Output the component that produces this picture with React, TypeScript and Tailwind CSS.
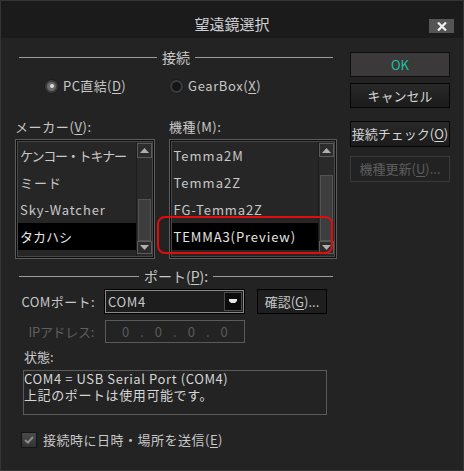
import React from 'react';

const ff = "font-['Noto_Sans_CJK_JP','Noto_Sans',sans-serif]";

function GroupLine({ children }: { children: React.ReactNode }) {
  return (
    <div className="flex items-center h-[14px] w-[314px] ml-[4px]">
      <div className="flex-1 h-px bg-[#9c9c9c]" />
      <span className="px-[5px] leading-none text-[14px] whitespace-nowrap">{children}</span>
      <div className="flex-1 h-px bg-[#9c9c9c]" />
    </div>
  );
}

function Radio({ checked }: { checked?: boolean }) {
  return (
    <span className="w-[15px] h-[15px] rounded-full bg-[#3c3c3c] border border-[#1a1a1a] flex items-center justify-center">
      <span className={`w-[9px] h-[9px] rounded-full flex items-center justify-center ${checked ? 'bg-[#6a6a6a]' : 'bg-[#151515]'}`}>
        {checked && <span className="w-[4px] h-[4px] rounded-full bg-[#dcdcdc]" />}
      </span>
    </span>
  );
}

function Arrow({ up }: { up?: boolean }) {
  return (
    <svg width="9" height="5" viewBox="0 0 9 5">
      {up ? <path d="M4.5 0 L9 5 L0 5 Z" fill="#b0b0b0" /> : <path d="M0 0 L9 0 L4.5 5 Z" fill="#b0b0b0" />}
    </svg>
  );
}

function ScrollBar({ thumbTop, thumbH, upH }: { thumbTop: number; thumbH: number; upH: number }) {
  return (
    <div className="w-[16px] flex flex-col bg-[#2a2a2a] border-l border-[#1c1c1c]">
      <div className="border border-[#5a5a5a] bg-[#2c2c2c] flex items-center justify-center mt-px" style={{ height: upH }}>
        <Arrow up />
      </div>
      <div className="flex-1 px-px">
        <div className="border border-[#525252] bg-[#3d3d3d]" style={{ marginTop: thumbTop, height: thumbH }} />
      </div>
      <div className="h-[13px] border border-[#5a5a5a] bg-[#2c2c2c] flex items-center justify-center mb-[2px]">
        <Arrow />
      </div>
    </div>
  );
}

function ListBox({ items, sel, width, thumbTop, thumbH, upH, tracking }: { items: string[]; sel: number; width: number; thumbTop: number; thumbH: number; upH: number; tracking: string[] }) {
  return (
    <div className="h-[120px] border border-[#5c5c5c] p-px bg-[#0e0e0e]" style={{ width }}>
      <div className="h-full border border-[#474747] flex bg-[#262626]">
        <div className="flex-1 overflow-hidden">
          {items.map((it, i) => (
            <div key={i} className={`h-[27px] flex items-center pl-[2px] text-[13px] whitespace-nowrap ${tracking[i]} ${i === sel ? 'bg-black text-[#e4e4e4]' : ''}`}>
              {it}
            </div>
          ))}
          <div className="h-[4px]" />
        </div>
        <ScrollBar thumbTop={thumbTop} thumbH={thumbH} upH={upH} />
      </div>
    </div>
  );
}

function Btn({ children, variant }: { children: React.ReactNode; variant?: 'ok' | 'disabled' }) {
  const cls =
    variant === 'ok'
      ? 'bg-[#3b3939] border-[#0e0e0e] text-[#1fc0a0]'
      : variant === 'disabled'
      ? 'bg-[#222222] border-[#3a3a3a] text-[#5e5e5e]'
      : 'bg-gradient-to-b from-[#292929] to-[#1b1b1b] border-[#050505] text-[#d4d4d4]';
  return <div className={`w-[100px] flex items-center justify-center border text-[13px] whitespace-nowrap ${cls}`}>{children}</div>;
}

export default function App() {
  return (
    <div className={`w-[464px] h-[471px] bg-[#232323] border border-[#353535] flex flex-col text-[#c8c8c8] ${ff}`}>
      {/* Title bar */}
      <div className="h-[37px] bg-[#1b1b1b] grid grid-cols-[1fr_auto_1fr] shrink-0">
        <div />
        <div className="text-[15px] text-[#cdd0d4] pt-[13px] leading-[20px]">望遠鏡選択</div>
        <div className="flex justify-end pt-[18px] pr-[9px]">
          <div className="w-[25px] h-[14px] bg-[#555555] flex items-center justify-center">
            <svg width="10" height="9" viewBox="0 0 10 9">
              <path d="M1 0.5 L9 8.5 M9 0.5 L1 8.5" stroke="#f0f0f0" strokeWidth="2.2" />
            </svg>
          </div>
        </div>
      </div>

      {/* Body */}
      <div className="flex flex-1 pl-[14px]">
        {/* Left column */}
        <div className="w-[322px] flex flex-col">
          <div className="mt-[12px]">
            <GroupLine>接続</GroupLine>
          </div>
          <div className="flex items-center h-[16px] mt-[14px] text-[13px]">
            <div className="ml-[29px] flex items-center gap-[4px]">
              <Radio checked />
              <span className="tracking-[0.4px]">PC直結(<u className="underline-offset-2">D</u>)</span>
            </div>
            <div className="ml-[43px] flex items-center gap-[4px]">
              <Radio />
              <span className="tracking-[0.6px]">GearBox(<u className="underline-offset-2">X</u>)</span>
            </div>
          </div>
          <div className="flex h-[14px] mt-[26px] text-[13px] leading-[14px]">
            <span className="w-[154px] tracking-[0.6px]">メーカー(<u className="underline-offset-2">V</u>):</span>
            <span className="tracking-[0.6px]">機種(M):</span>
          </div>
          <div className="relative flex gap-[14px] mt-[5px]">
            <ListBox
              width={140}
              items={['ケンコー・トキナー', 'ミード', 'Sky-Watcher', 'タカハシ']}
              tracking={['tracking-[-1.2px]', 'tracking-[1px]', 'tracking-[0.9px]', 'tracking-[0px]']}
              sel={3}
              upH={15}
              thumbTop={41}
              thumbH={42}
            />
            <ListBox
              width={169}
              items={['Temma2M', 'Temma2Z', 'FG-Temma2Z', 'TEMMA3(Preview)']}
              tracking={['tracking-[1px]', 'tracking-[1px]', 'tracking-[0.9px]', 'tracking-[0.9px]']}
              sel={3}
              upH={14}
              thumbTop={18}
              thumbH={66}
            />
            <div className="absolute left-[142px] top-[77px] w-[176px] h-[38px] border-2 border-[#e00d0d] rounded-[8px]" />
          </div>

          <div className="mt-[10px]">
            <GroupLine>
              ポート(<u className="underline-offset-2">P</u>):
            </GroupLine>
          </div>

          <div className="flex items-center mt-[6px] h-[25px]">
            <span className="w-[83px] pr-[3px] text-right text-[13px] tracking-[0.4px] whitespace-nowrap">COMポート:</span>
            <div className="ml-[7px] w-[139px] h-[23px] border border-[#8a8a8a] outline outline-1 outline-black bg-[#1d1d1d] flex items-center justify-between">
              <span className="pl-[2px] text-[13px] tracking-[0.6px]">COM4</span>
              <div className="w-[18px] h-[19px] mr-px bg-[#0c0c0c] border border-[#4a4a4a] flex items-center justify-center">
                <svg width="8" height="5" viewBox="0 0 8 5">
                  <path d="M0 0 H8 V2 L6 4 H2 L0 2 Z" fill="#e8e8e8" />
                </svg>
              </div>
            </div>
            <div className="ml-[13px] w-[70px] h-[25px] border border-black bg-[#1e1e1e] flex items-center justify-center text-[13px] whitespace-nowrap">
              確認(<u className="underline-offset-2">G</u>)...
            </div>
          </div>

          <div className="flex items-center mt-[6px] h-[23px]">
            <span className="w-[82px] pr-[3px] text-right text-[13px] text-[#5f5f5f] tracking-[-0.3px] whitespace-nowrap">IPアドレス:</span>
            <div className="ml-[8px] w-[140px] h-[23px] border border-[#5a5a5a] flex items-center text-[13px] text-[#5a5a5a]">
              <span className="ml-[16px]">0</span>
              <span className="ml-[11px]">.</span>
              <span className="ml-[11px]">0</span>
              <span className="ml-[11px]">.</span>
              <span className="ml-[11px]">0</span>
              <span className="ml-[11px]">.</span>
              <span className="ml-[11px]">0</span>
            </div>
          </div>

          <div className="mt-[7px] ml-[9px] h-[14px] text-[13px] leading-[14px]">状態:</div>

          <div className="mt-[6px] ml-[8px] w-[304px] h-[45px] border border-[#5a5a5a] text-[13px] leading-[16px] text-[#d6d6d6]">
            <div className="tracking-[0.6px]">COM4 = USB Serial Port (COM4)</div>
            <div className="tracking-[0.6px]">上記のポートは使用可能です。</div>
          </div>

          <div className="flex items-center mt-[16px] ml-[6px] h-[18px] gap-[6px]">
            <div className="w-[16px] h-[16px] bg-gradient-to-b from-[#4a4a4a] to-[#333333] border border-[#151515] flex items-center justify-center">
              <svg width="10" height="8" viewBox="0 0 10 8">
                <path d="M1 4 L4 6.5 L9 1" stroke="#8a8a8a" strokeWidth="2" fill="none" />
              </svg>
            </div>
            <span className="text-[13px] tracking-[0.5px]">接続時に日時・場所を送信(<u className="underline-offset-2">E</u>)</span>
          </div>
        </div>

        {/* Right column */}
        <div className="ml-[13px] flex flex-col pt-[14px]">
          <div className="h-[25px] flex"><Btn variant="ok">OK</Btn></div>
          <div className="h-[25px] flex mt-[6px]"><Btn>キャンセル</Btn></div>
          <div className="h-[26px] flex mt-[13px]"><Btn>接続チェック(<u className="underline-offset-2">O</u>)</Btn></div>
          <div className="h-[26px] flex mt-[9px]"><Btn variant="disabled">機種更新(<u className="underline-offset-2">U</u>)...</Btn></div>
        </div>
      </div>
    </div>
  );
}
